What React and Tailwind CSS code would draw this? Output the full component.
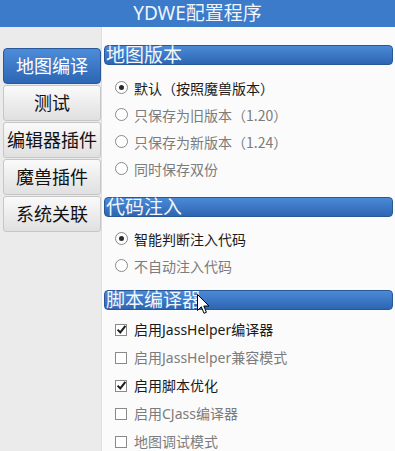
import React from "react";

const FONT = { fontFamily: '"Noto Sans", "Noto Sans CJK SC", sans-serif' };
const CJK = { fontFamily: '"Noto Sans CJK SC", "Noto Sans", sans-serif' };

function Radio({ checked, label, enabled }) {
  return (
    <div className="flex items-center h-[27px] pl-[11px]">
      <span className="w-[13px] h-[13px] rounded-full border border-[#8a8a8a] bg-white flex items-center justify-center shrink-0">
        {checked && <span className="w-[5px] h-[5px] rounded-full bg-[#2a2a2a]" />}
      </span>
      <span style={CJK} className={"ml-[6px] text-[14px] leading-none " + (enabled ? "text-[#1a1a1a]" : "text-[#7c7c7c]")}>{label}</span>
    </div>
  );
}

function Check({ checked, label, enabled }) {
  return (
    <div className="flex items-center h-[28px] pl-[11px]">
      <span className="relative w-[12px] h-[12px] border border-[#8a8a8a] bg-white shrink-0">
        {checked && (
          <svg className="absolute left-[0px] top-[-1px]" width="11" height="11" viewBox="0 0 11 11">
            <path d="M1.6 5.6 L4.3 8.4 L9.4 1.8" fill="none" stroke="#1e1e1e" strokeWidth="2" />
          </svg>
        )}
      </span>
      <span className={"ml-[7px] text-[14px] leading-none " + (enabled ? "text-[#1a1a1a]" : "text-[#7c7c7c]")}>{label}</span>
    </div>
  );
}

function Header({ children }) {
  return (
    <div className="h-[20px] rounded-[4px] border border-[#2a5896] bg-gradient-to-b from-[#4b8ad6] to-[#2d66b3] text-[#f2f6fc] text-[19px] leading-[18px] pl-[1px] overflow-visible whitespace-nowrap">
      {children}
    </div>
  );
}

function Tab({ active, children }) {
  return active ? (
    <div className="h-[36px] w-[98px] rounded-[4px] border border-[#2a5896] bg-gradient-to-b from-[#4d8cd8] to-[#2c66b4] text-white text-[18px] flex items-center justify-center">
      {children}
    </div>
  ) : (
    <div className="h-[36px] w-[98px] rounded-[3px] border border-[#c6c6c6] bg-gradient-to-b from-[#fafafa] to-[#e0e0e0] text-[#111] text-[18px] flex items-center justify-center">
      {children}
    </div>
  );
}

export default function App() {
  return (
    <div className="relative w-[395px] h-[451px] overflow-hidden flex flex-col bg-[#fbfbfb]" style={FONT}>
      <div className="h-[27px] bg-[#3b7bc9] flex items-center justify-center text-[#eef4fb] text-[19px] leading-none shrink-0">
        YDWE配置程序
      </div>
      <div className="flex flex-1">
        <aside className="w-[102px] bg-[#ebebeb] border-r border-[#dedede] pt-[21px] pl-[3px] flex flex-col gap-[1px] shrink-0">
          <Tab active>地图编译</Tab>
          <Tab>测试</Tab>
          <Tab>编辑器插件</Tab>
          <Tab>魔兽插件</Tab>
          <Tab>系统关联</Tab>
        </aside>
        <main className="flex-1 pl-[2px] pr-[2px] pt-[18px]">
          <Header>地图版本</Header>
          <div className="pt-[9px]">
            <Radio checked enabled label="默认（按照魔兽版本）" />
            <Radio label="只保存为旧版本（1.20）" />
            <Radio label="只保存为新版本（1.24）" />
            <Radio label="同时保存双份" />
          </div>
          <div className="mt-[15px]">
            <Header>代码注入</Header>
          </div>
          <div className="pt-[8px]">
            <Radio checked enabled label="智能判断注入代码" />
            <Radio label="不自动注入代码" />
          </div>
          <div className="mt-[11px]">
            <Header>脚本编译器</Header>
          </div>
          <div className="pt-[6px]">
            <Check checked enabled label="启用JassHelper编译器" />
            <Check label="启用JassHelper兼容模式" />
            <Check checked enabled label="启用脚本优化" />
            <Check label="启用CJass编译器" />
            <Check label="地图调试模式" />
          </div>
        </main>
      </div>
      <svg className="absolute left-[197px] top-[294px]" width="14" height="21" viewBox="0 0 14 21">
        <path d="M0.5 0.5 L0.5 16.5 L4.3 12.8 L7 19.3 L9.4 18.3 L6.8 12 L12 12 Z" fill="#fff" stroke="#000" strokeWidth="1" strokeLinejoin="miter" />
      </svg>
    </div>
  );
}
